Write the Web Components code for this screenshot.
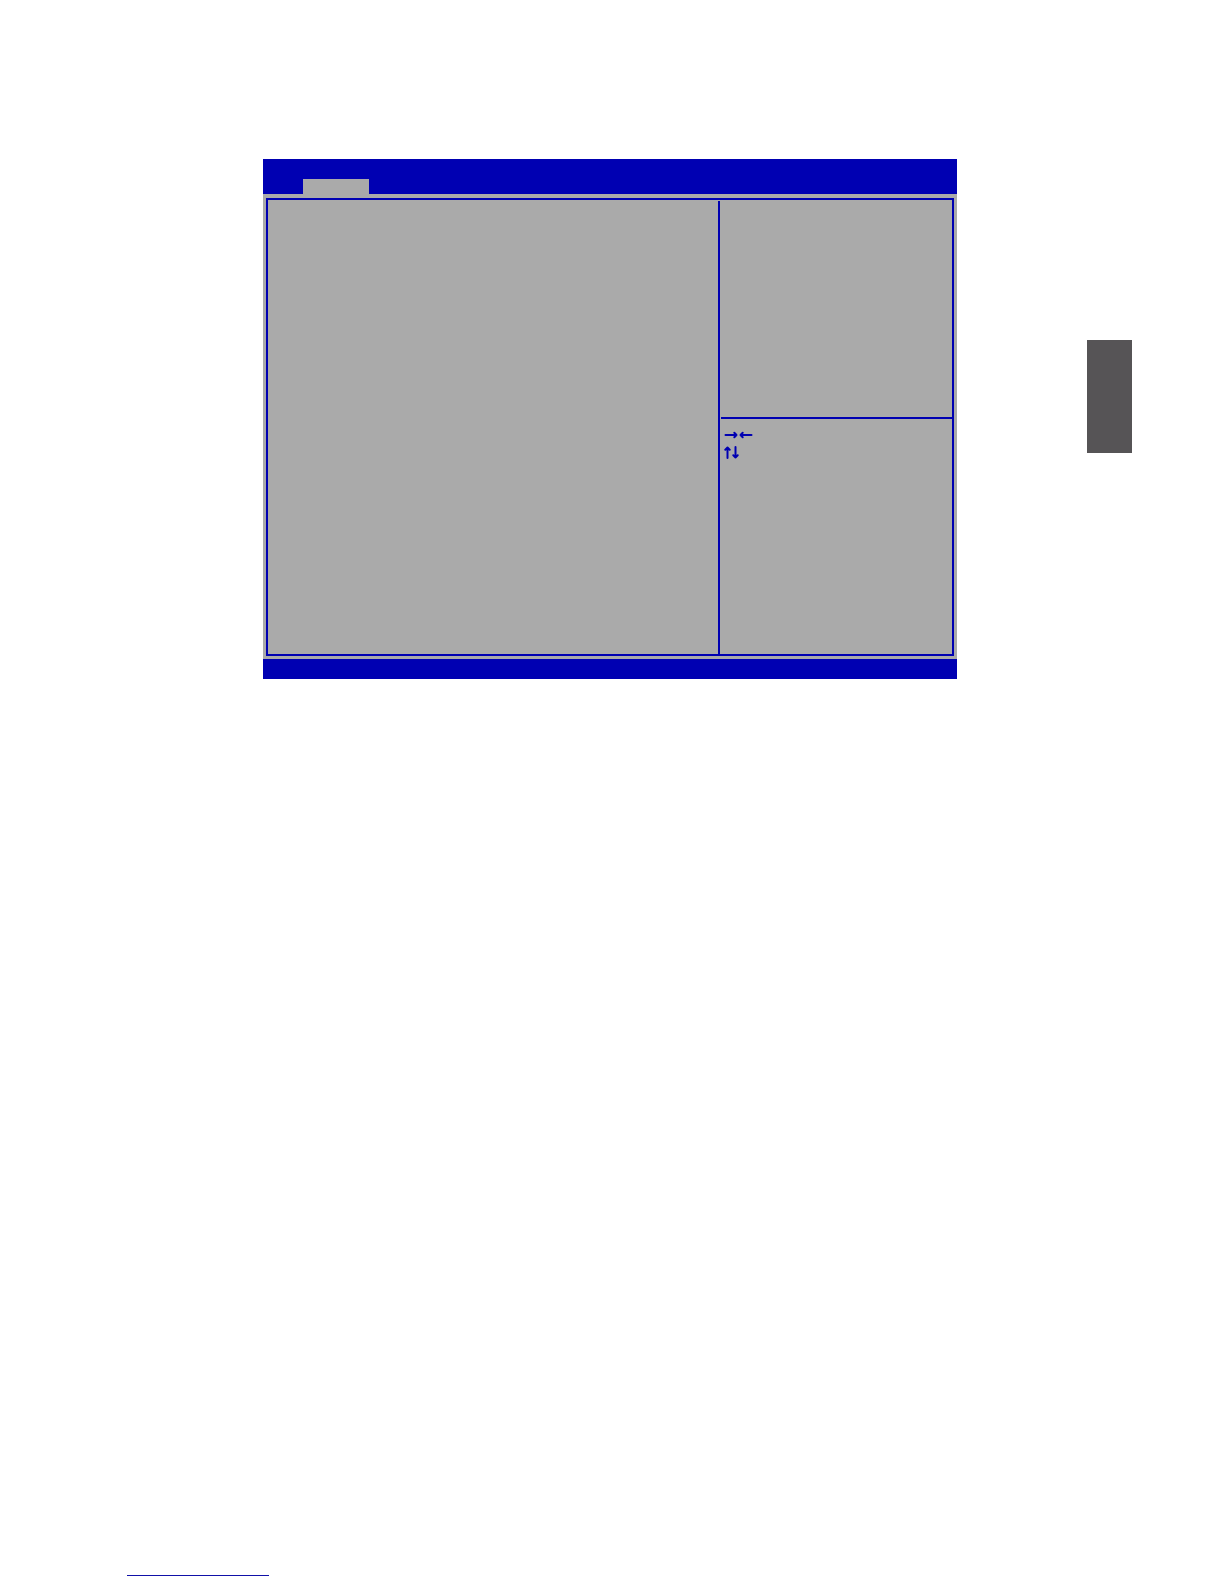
<!DOCTYPE html>
<html lang="en">
<head>
<meta charset="utf-8">
<meta name="viewport" content="width=device-width, initial-scale=1">
<title>BIOS Setup</title>
<style>
    body {
        margin: 0;
        background: #fff;
        font-family: "Liberation Sans", Arial, sans-serif;
        --blue: #0000b2;
        --grey: #aaaaaa;
    }
</style>
</head>
<body>
<manual-page>
    <bios-screen>
        <bios-tab slot="tabs"></bios-tab>
        <key-legend slot="keys"></key-legend>
    </bios-screen>
    <chapter-mark slot="mark"></chapter-mark>
    <footer-rule slot="footer"></footer-rule>
</manual-page>

<script>
/**
 * Attach an open shadow root and fill it
 * @param {HTMLElement} el
 * @param {string} html
 */
function render(el, html) {
    const template = document.createElement('template');
    template.innerHTML = html;
    el.attachShadow({ mode: 'open' }).appendChild(template.content.cloneNode(true));
}

class ManualPage extends HTMLElement {
    constructor() {
        super();
        render(this, `
        <style>
            :host {
                display: flex;
                flex-direction: column;
                box-sizing: border-box;
                min-height: 100vh;
                padding: 159px 0 8px;
            }
            main {
                display: grid;
                grid-template-columns: 263fr 694fr 130fr 45fr 92fr;
                align-items: start;
            }
            .content {
                grid-column: 2;
            }
            aside {
                grid-column: 4;
                padding-top: 181px;
            }
            footer {
                margin-top: auto;
                padding-left: 127px;
            }
        </style>
        <main>
            <div class="content"><slot></slot></div>
            <aside><slot name="mark"></slot></aside>
        </main>
        <footer><slot name="footer"></slot></footer>
        `);
    }
}

class BiosScreen extends HTMLElement {
    constructor() {
        super();
        render(this, `
        <style>
            :host {
                display: block;
                background: var(--grey);
            }
            nav {
                display: flex;
                padding: 20px 40px 0;
                background: var(--blue);
            }
            .body {
                padding: 4px 3px 3px;
            }
            .frame {
                display: grid;
                grid-template-columns: 450fr 234fr;
                min-height: 454px;
                border: 2px solid var(--blue);
            }
            .side {
                display: grid;
                grid-template-rows: 216px 1fr;
                margin-top: 1px;
                border-left: 2px solid var(--blue);
            }
            .keys {
                margin-left: 1px;
                padding: 9px 3px;
                border-top: 2px solid var(--blue);
            }
            .status {
                height: 20px;
                background: var(--blue);
            }
        </style>
        <nav><slot name="tabs"></slot></nav>
        <div class="body">
            <div class="frame">
                <section><slot></slot></section>
                <div class="side">
                    <section class="help"></section>
                    <section class="keys"><slot name="keys"></slot></section>
                </div>
            </div>
        </div>
        <div class="status"></div>
        `);
    }
}

class BiosTab extends HTMLElement {
    constructor() {
        super();
        render(this, `
        <style>
            :host {
                display: block;
            }
            button {
                display: block;
                width: 66px;
                height: 15px;
                padding: 0;
                border: 0;
                background: var(--grey);
            }
        </style>
        <button type="button" aria-label="Selected tab"></button>
        `);
    }
}

class KeyLegend extends HTMLElement {
    constructor() {
        super();
        render(this, `
        <style>
            :host {
                display: flex;
                flex-direction: column;
                gap: 4px;
            }
            svg {
                display: block;
                fill: none;
                stroke: var(--blue);
                stroke-width: 2;
                stroke-linecap: round;
                stroke-linejoin: round;
            }
        </style>
        <!-- left / right -->
        <svg width="30" height="14" viewBox="0 0 30 14" aria-hidden="true">
            <path d="M1.5 7H12.5M10.3 4.8L12.5 7l-2.2 2.2M27.5 7H16.5M18.7 4.8L16.5 7l2.2 2.2"/>
        </svg>
        <!-- up / down -->
        <svg width="16" height="14" viewBox="0 0 16 14" aria-hidden="true">
            <path d="M3.5 12V1.5M1.3 3.7l2.2-2.2 2.2 2.2M11.5 1V11.5M9.3 9.3l2.2 2.2 2.2-2.2"/>
        </svg>
        `);
    }
}

class ChapterMark extends HTMLElement {
    constructor() {
        super();
        render(this, `
        <style>
            :host {
                display: block;
                height: 113px;
                background: #565456;
            }
        </style>
        `);
    }
}

class FooterRule extends HTMLElement {
    constructor() {
        super();
        render(this, `
        <style>
            :host {
                display: block;
                width: 142px;
                border-top: 1px solid #1111a8;
            }
        </style>
        `);
    }
}

customElements.define('manual-page', ManualPage);
customElements.define('bios-screen', BiosScreen);
customElements.define('bios-tab', BiosTab);
customElements.define('key-legend', KeyLegend);
customElements.define('chapter-mark', ChapterMark);
customElements.define('footer-rule', FooterRule);
</script>
</body>
</html>
